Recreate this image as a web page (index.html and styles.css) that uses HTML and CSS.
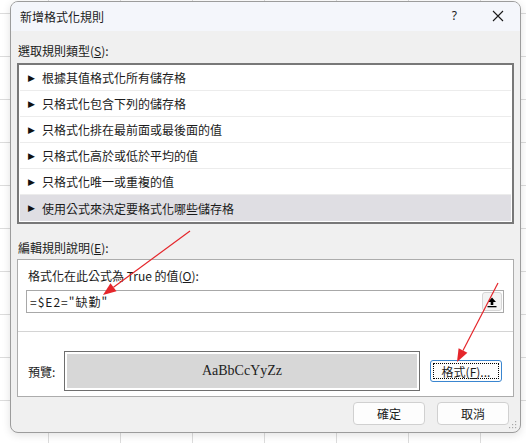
FILE: index.html
```html
<!DOCTYPE html>
<html lang="zh-Hant">
<head>
<meta charset="utf-8">
<title>新增格式化規則</title>
<link rel="stylesheet" href="styles.css">
</head>
<body>
<div class="sheet">
  <div class="dialog">
    <div class="titlebar">
      <span class="title">新增格式化規則</span>
      <span class="help">?</span>
      <span class="close">
        <svg width="12" height="12" viewBox="0 0 12 12"><path d="M1 1 L11 11 M11 1 L1 11" stroke="#1a1a1a" stroke-width="1.1" fill="none"/></svg>
      </span>
    </div>
    <div class="content">
      <div class="label first">選取規則類型(<u>S</u>):</div>
      <div class="listbox">
        <div class="row"><span class="tri">▶</span>根據其值格式化所有儲存格</div>
        <div class="row"><span class="tri">▶</span>只格式化包含下列的儲存格</div>
        <div class="row"><span class="tri">▶</span>只格式化排在最前面或最後面的值</div>
        <div class="row"><span class="tri">▶</span>只格式化高於或低於平均的值</div>
        <div class="row"><span class="tri">▶</span>只格式化唯一或重複的值</div>
        <div class="row selected"><span class="tri">▶</span>使用公式來決定要格式化哪些儲存格</div>
      </div>
      <div class="label second">編輯規則說明(<u>E</u>):</div>
      <div class="panel">
        <div class="panel-top">
          <div class="sublabel">格式化在此公式為 True 的值(<u>O</u>):</div>
          <div class="input">
            <span class="formula">=$E2="缺勤"</span>
            <span class="collapse">
              <svg width="12" height="12" viewBox="0 0 12 12"><path d="M6 1.5 L10 6 L7.3 6 L7.3 9 L4.7 9 L4.7 6 L2 6 Z" fill="#000"/><rect x="1.5" y="10" width="9" height="1.3" fill="#000"/></svg>
            </span>
          </div>
        </div>
        <div class="sep"></div>
        <div class="preview-row">
          <span class="plabel">預覽:</span>
          <div class="preview"><div class="preview-fill">AaBbCcYyZz</div></div>
          <div class="btn fmt"><span class="focus">格式(<u>F</u>)...</span></div>
        </div>
      </div>
      <div class="buttons">
        <div class="btn">確定</div>
        <div class="btn">取消</div>
      </div>
    </div>
    <svg class="grip" width="8" height="8" viewBox="0 0 8 8"><g fill="#a8a8a8"><rect x="6" y="0" width="1.2" height="1.2"/><rect x="3" y="3" width="1.2" height="1.2"/><rect x="6" y="3" width="1.2" height="1.2"/><rect x="0" y="6" width="1.2" height="1.2"/><rect x="3" y="6" width="1.2" height="1.2"/><rect x="6" y="6" width="1.2" height="1.2"/></g></svg>
  </div>
  <svg class="arrows" width="526" height="443" viewBox="0 0 526 443">
    <g stroke="#e5262b" stroke-width="1.2" fill="#e5262b">
      <line x1="190" y1="231" x2="113.5" y2="287.3"/>
      <polygon points="103,295 116.5,291.3 110.5,283.3" stroke="none"/>
      <line x1="498" y1="283" x2="463" y2="350.5"/>
      <polygon points="457,362 467.4,352.8 458.6,348.2" stroke="none"/>
    </g>
  </svg>
</div>
</body>
</html>
```
FILE: styles.css
```css
html, body {
  margin: 0;
  padding: 0;
}
body {
  width: 526px;
  height: 443px;
  overflow: hidden;
  font-family: "Noto Sans CJK TC", "Microsoft JhengHei", "Noto Sans", sans-serif;
  font-size: 12px;
  color: #1b1b1b;
}
.sheet {
  position: relative;
  width: 526px;
  height: 443px;
  background-color: #ffffff;
  background-image:
    repeating-linear-gradient(to right, transparent 0, transparent 48px, #dcdcdc 48px, #dcdcdc 49px, transparent 49px, transparent 72px),
    repeating-linear-gradient(to bottom, transparent 0, transparent 13px, #dcdcdc 13px, #dcdcdc 14px, transparent 14px, transparent 43px);
  padding-top: 1px;
  box-sizing: border-box;
}
.dialog {
  position: relative;
  margin-left: 10px;
  width: 511px;
  height: 432px;
  box-sizing: border-box;
  border: 1px solid #9c9c9c;
  border-radius: 8px;
  background: #f0f0f0;
  overflow: hidden;
  box-shadow: 0 2px 8px rgba(0,0,0,0.12);
}
.titlebar {
  height: 29px;
  background: #f4f6fb;
  display: flex;
  align-items: center;
  padding-left: 9px;
  padding-right: 16px;
}
.title {
  flex: 1;
  font-size: 12px;
}
.help {
  font-family: "Noto Sans", sans-serif;
  font-size: 12px;
  margin-right: 35px;
  margin-top: -2px;
}
.close {
  display: flex;
  margin-top: -2px;
}
.content {
  padding: 0 6px;
  display: flex;
  flex-direction: column;
}
.label {
  line-height: 16px;
  padding-left: 1px;
}
.label.first {
  margin-top: 12px;
  margin-bottom: 4px;
}
.label.second {
  margin-top: 16px;
  margin-bottom: 3px;
}
.listbox {
  border: 2px solid #787878;
  background: #ffffff;
  height: 157px;
  padding: 0 1px;
}
.row {
  height: 25px;
  border-bottom: 1px solid #ececec;
  display: flex;
  align-items: center;
  padding-left: 8px;
}
.row.selected {
  background: #dfdee3;
  border-bottom: none;
  height: 26px;
}
.tri {
  font-size: 9px;
  width: 14px;
  color: #111;
  font-family: "DejaVu Sans", sans-serif;
}
.panel {
  border: 1px solid #acacac;
  background: #ffffff;
  height: 138px;
  box-sizing: border-box;
  display: flex;
  flex-direction: column;
}
.panel-top {
  padding: 8px 9px 0 8px;
}
.sublabel {
  line-height: 16px;
  padding-left: 2px;
  margin-bottom: 6px;
}
.input {
  height: 23px;
  box-sizing: border-box;
  border: 1px solid #a8a8a8;
  display: flex;
  align-items: center;
  padding-left: 3px;
  padding-right: 1px;
}
.formula {
  flex: 1;
  letter-spacing: 1px;
}
.collapse {
  width: 20px;
  height: 19px;
  box-sizing: border-box;
  border: 1px solid #d6d6d6;
  border-radius: 3px;
  background: #f3f3f3;
  display: flex;
  align-items: center;
  justify-content: center;
}
.sep {
  height: 1px;
  background: #d4d4d4;
  margin-top: 18px;
}
.preview-row {
  display: flex;
  align-items: center;
  padding-left: 10px;
  margin-top: 19px;
}
.plabel {
  width: 36px;
}
.preview {
  width: 356px;
  height: 40px;
  box-sizing: border-box;
  border: 1px solid #6e6e6e;
  padding: 2px;
  background: #ffffff;
}
.preview-fill {
  height: 100%;
  background: #d7d7d7;
  display: flex;
  align-items: center;
  justify-content: center;
  font-family: "Liberation Serif", "DejaVu Serif", serif;
  font-size: 14px;
  color: #222;
}
.btn {
  width: 72px;
  height: 23px;
  box-sizing: border-box;
  border: 1px solid #d0d0d0;
  border-radius: 4px;
  background: #fdfdfd;
  display: flex;
  align-items: center;
  justify-content: center;
}
.btn.fmt {
  margin-left: 10px;
  height: 22px;
  border: 1px solid #3a86d0;
  border-radius: 3px;
  padding: 2px;
}
.focus {
  width: 100%;
  height: 100%;
  box-sizing: border-box;
  border: 1px dotted #000;
  display: flex;
  align-items: center;
  justify-content: center;
}
.buttons {
  display: flex;
  justify-content: flex-end;
  gap: 12px;
  margin-top: 5px;
  padding-right: 5px;
}
.grip {
  position: absolute;
  right: 3px;
  bottom: 3px;
}
.arrows {
  position: absolute;
  left: 0;
  top: 0;
  pointer-events: none;
}
u {
  text-decoration: underline;
  text-underline-offset: 1px;
}
```
